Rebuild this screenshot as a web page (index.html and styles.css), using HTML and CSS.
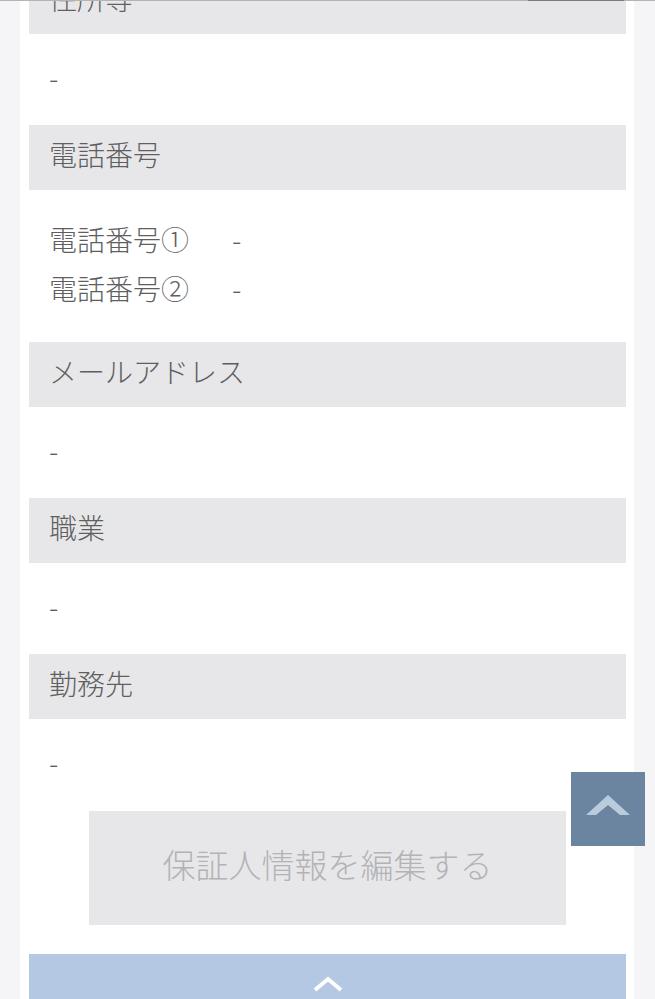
FILE: index.html
```html
<!DOCTYPE html>
<html lang="ja">
<head>
<meta charset="utf-8">
<link rel="stylesheet" href="styles.css">
</head>
<body>
<div class="topline"><span class="topline-thumb"></span></div>
<main class="panel">
  <section class="sec">
    <h2 class="sec-head">住所等</h2>
    <div class="sec-body">-</div>
  </section>
  <section class="sec">
    <h2 class="sec-head">電話番号</h2>
    <div class="sec-body phones">
      <span>電話番号①</span><span>-</span>
      <span>電話番号②</span><span>-</span>
    </div>
  </section>
  <section class="sec">
    <h2 class="sec-head">メールアドレス</h2>
    <div class="sec-body">-</div>
  </section>
  <section class="sec">
    <h2 class="sec-head">職業</h2>
    <div class="sec-body">-</div>
  </section>
  <section class="sec">
    <h2 class="sec-head">勤務先</h2>
    <div class="sec-body">-</div>
  </section>
  <div class="btn-wrap">
    <button class="edit-btn" type="button">保証人情報を編集する</button>
  </div>
  <div class="page-top-bar">
    <svg class="bar-chevron" width="30" height="16" viewBox="0 0 30 16"><polyline points="2,14 15,3 28,14" fill="none" stroke="#ffffff" stroke-width="4"/></svg>
  </div>
</main>
<a class="to-top" href="#">
  <svg width="44" height="24" viewBox="0 0 44 24"><polygon points="0,22 22,2 44,22 34,22 22,12 10,22" fill="#bccbdb"/></svg>
</a>
</body>
</html>
```
FILE: styles.css
```css
html, body {
  margin: 0;
  padding: 0;
}
body {
  background: #f5f5f7;
  font-family: "Noto Sans CJK JP", "Noto Sans", sans-serif;
  color: #5f5f62;
  overflow: hidden;
}
.topline {
  position: fixed;
  top: 0;
  left: 0;
  right: 0;
  height: 1px;
  background: #b4b4b6;
  z-index: 5;
}
.topline-thumb {
  position: absolute;
  left: 528px;
  width: 96px;
  top: 0;
  height: 1px;
  background: #7a7a7c;
}
.panel {
  background: #ffffff;
  margin: -31px 21px 0 20px;
  padding: 0 8px 0 9px;
}
.sec-head {
  margin: 0;
  height: 65px;
  box-sizing: border-box;
  background: #e7e7e9;
  font-size: 28px;
  font-weight: 300;
  line-height: 59px;
  padding: 0 0 6px 20px;
  color: #5f5f62;
}
.sec-body {
  padding: 19px 20px 23px;
  font-size: 28px;
  font-weight: 300;
  line-height: 49px;
  color: #5f5f62;
}
.phones {
  padding: 25px 20px 29px;
  display: grid;
  grid-template-columns: max-content max-content;
  column-gap: 43px;
}
.btn-wrap {
  display: flex;
  justify-content: center;
  padding-top: 1px;
  padding-bottom: 29px;
}
.edit-btn {
  width: 477px;
  height: 114px;
  border: none;
  background: #e7e7e9;
  color: #b3b3b6;
  font-family: "Noto Sans CJK JP", "Noto Sans", sans-serif;
  font-size: 33px;
  font-weight: 300;
  padding: 0 0 9px;
}
.page-top-bar {
  height: 60px;
  background: #b4c8e4;
  display: flex;
  justify-content: center;
  padding-top: 22px;
  box-sizing: border-box;
}
.to-top {
  position: fixed;
  right: 10px;
  bottom: 153px;
  width: 74px;
  height: 74px;
  background: #6b84a0;
  display: flex;
  align-items: center;
  justify-content: center;
  padding-bottom: 8px;
  box-sizing: border-box;
}
```
